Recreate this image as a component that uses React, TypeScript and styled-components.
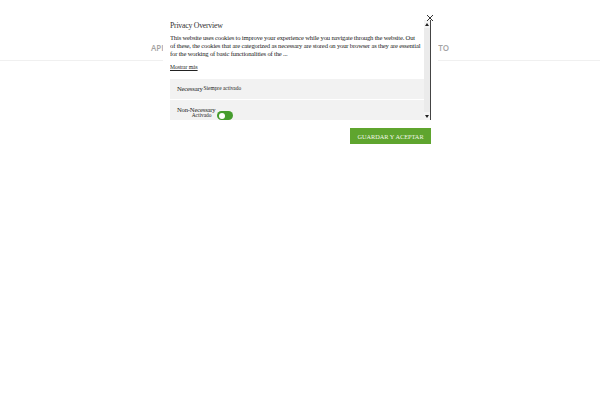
import React from "react";
import styled, { createGlobalStyle } from "styled-components";

const Global = createGlobalStyle`
  html, body { margin: 0; padding: 0; background: #fff; }
  body { width: 600px; height: 400px; overflow: hidden; font-family: "Liberation Serif", serif; }
  * { box-sizing: border-box; }
`;
const Page = styled.div`
  position: relative;
  width: 600px;
  height: 400px;
  background: #fff;
`;
const Nav = styled.nav`
  height: 61px;
  border-bottom: 1px solid #f0f0f0;
  display: flex;
  justify-content: space-between;
  align-items: flex-end;
  padding: 0 151px 6px;
`;
const NavItem = styled.span`
  font: 600 8px/12px "Open Sans", sans-serif;
  color: #a3a3a3;
`;
const Modal = styled.div`
  position: absolute;
  left: 163px;
  top: 13px;
  width: 275px;
  height: 138px;
  background: #fff;
  padding: 7px 7px 0 7px;
  opacity: 0.999;
`;
const Close = styled.button`
  position: absolute;
  right: 3px;
  top: 0;
  width: 10px;
  height: 10px;
  padding: 0;
  border: 0;
  background: none;
  display: flex;
  svg { display: block; }
`;
const Scroll = styled.div`
  width: 261px;
  height: 100px;
  display: flex;
`;
const Content = styled.div`
  width: 254px;
  height: 100px;
  overflow: hidden;
  flex: none;
`;
const Title = styled.h2`
  margin: 1px 0 3px;
  font-size: 7.8px;
  letter-spacing: -0.25px;
  line-height: 10px;
  font-weight: 400;
  color: #333;
`;
const Body = styled.p`
  margin: 0 0 5px;
  font-size: 6.6px;
  letter-spacing: -0.17px;
  line-height: 8px;
  color: #222;
  white-space: nowrap;
`;
const More = styled.a`
  display: block;
  font-size: 5.6px;
  letter-spacing: -0.05px;
  line-height: 8px;
  color: #222;
  text-decoration: underline;
  margin-bottom: 8px;
`;
const Row = styled.div`
  background: #f2f2f2;
  height: 20px;
  margin-bottom: 1px;
  padding: 0 7px 2px;
  position: relative;
  display: flex;
  align-items: center;
  gap: 1px;
  color: #222;
`;
const RowName = styled.span`
  font-size: 6.6px;
  letter-spacing: -0.17px;
`;
const RowNote = styled.span`
  font-size: 5.4px;
`;
const ToggleCell = styled.div`
  display: flex;
  flex-direction: column;
  align-self: flex-start;
  margin-top: 7px;
  line-height: 6px;
`;
const ToggleNote = styled.span`
  font-size: 5.4px;
  line-height: 5px;
  text-align: right;
  padding-right: 4px;
`;
const Toggle = styled.span`
  width: 16px;
  height: 9px;
  border-radius: 5px;
  background: #459c2d;
  position: absolute;
  left: 47px;
  top: 11px;
  &::before {
    content: "";
    position: absolute;
    left: 1.5px;
    top: 1.5px;
    width: 6px;
    height: 6px;
    border-radius: 50%;
    background: #fff;
  }
`;
const Bar = styled.div`
  width: 7px;
  height: 100px;
  flex: none;
  background: #ebebeb;
  border-right: 1px solid #444;
  display: flex;
  flex-direction: column;
  justify-content: space-between;
  align-items: center;
`;
const BarCap = styled.div`
  width: 100%;
  height: 8px;
  background: #f4f4f4;
  display: flex;
  align-items: center;
  justify-content: center;
  svg { display: block; }
`;
const Footer = styled.div`
  display: flex;
  justify-content: flex-end;
  padding-top: 8px;
  width: 261px;
`;
const Save = styled.button`
  width: 81px;
  height: 16px;
  border: 0;
  padding: 0;
  background: #5fa52e;
  color: #f2f7ea;
  font-family: "Liberation Serif", serif;
  font-size: 6.3px;
  white-space: nowrap;
`;

export default function App() {
  return (
    <Page>
      <Global />
      <Nav>
        <NavItem>API</NavItem>
        <NavItem>TO</NavItem>
      </Nav>
      <Modal>
        <Close aria-label="Cerrar">
          <svg width="10" height="10" viewBox="0 0 10 10">
            <path d="M2 2 L8 8 M8 2 L2 8" stroke="#333" strokeWidth="1" />
          </svg>
        </Close>
        <Scroll>
          <Content>
            <Title>Privacy Overview</Title>
            <Body>
              This website uses cookies to improve your experience while you navigate through the website. Out<br />
              of these, the cookies that are categorized as necessary are stored on your browser as they are essential<br />
              for the working of basic functionalities of the ...
            </Body>
            <More>Mostrar más</More>
            <Row>
              <RowName>Necessary</RowName>
              <RowNote>Siempre activado</RowNote>
            </Row>
            <Row>
              <ToggleCell>
                <RowName>Non-Necessary</RowName>
                <ToggleNote>Activado</ToggleNote>
              </ToggleCell>
              <Toggle />
            </Row>
          </Content>
          <Bar>
            <BarCap>
              <svg width="4" height="3" viewBox="0 0 4 3"><path d="M2 0 L4 3 H0 Z" fill="#222" /></svg>
            </BarCap>
            <BarCap>
              <svg width="4" height="3" viewBox="0 0 4 3"><path d="M0 0 H4 L2 3 Z" fill="#222" /></svg>
            </BarCap>
          </Bar>
        </Scroll>
        <Footer>
          <Save>GUARDAR Y ACEPTAR</Save>
        </Footer>
      </Modal>
    </Page>
  );
}
